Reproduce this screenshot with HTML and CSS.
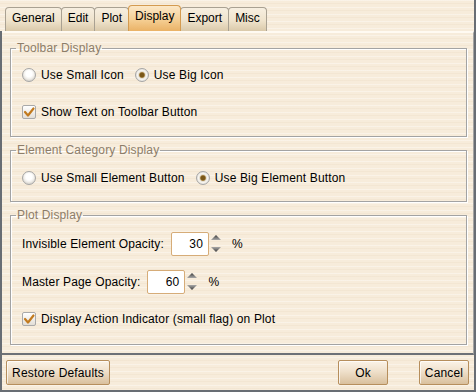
FILE: index.html
```html
<!DOCTYPE html>
<html lang="en">
  <head>
    <meta charset="UTF-8" />
    <meta name="viewport" content="width=device-width, initial-scale=1.0" />
    <title>Preferences - Display</title>
    <link rel="stylesheet" href="styles.css">
  </head>
  <body>
    <div class="window">
      <!-- tab strip -->
      <div class="tabs">
        <div class="tab">General</div>
        <div class="tab">Edit</div>
        <div class="tab">Plot</div>
        <div class="tab active">Display</div>
        <div class="tab">Export</div>
        <div class="tab">Misc</div>
      </div>

      <div class="frame">
        <div class="panel">
          <fieldset class="group group-toolbar">
            <legend>Toolbar Display</legend>
            <div class="row">
              <label class="option"><span class="radio"></span>Use Small Icon</label>
              <label class="option"><span class="radio on"></span>Use Big Icon</label>
            </div>
            <div class="row row-check">
              <label class="option">
                <span class="check">
                  <svg width="14" height="14" viewBox="0 0 14 14"><polyline points="3,7 6,10.5 11.5,3.5" fill="none" stroke="#c27a1e" stroke-width="2.2" stroke-linecap="round" stroke-linejoin="round"/></svg>
                </span>Show Text on Toolbar Button
              </label>
            </div>
          </fieldset>

          <fieldset class="group group-element">
            <legend>Element Category Display</legend>
            <div class="row">
              <label class="option"><span class="radio"></span>Use Small Element Button</label>
              <label class="option"><span class="radio on"></span>Use Big Element Button</label>
            </div>
          </fieldset>

          <fieldset class="group group-plot">
            <legend>Plot Display</legend>
            <div class="row row-spin">
              <span class="label">Invisible Element Opacity:</span>
              <span class="spin-box">30</span>
              <svg class="spin-arrows" width="12" height="24" viewBox="0 0 12 24">
                <defs>
                  <linearGradient id="arrowUp" x1="0" y1="0" x2="0" y2="1"><stop offset="0" stop-color="#3c3c3c"/><stop offset="1" stop-color="#a9a9a9"/></linearGradient>
                  <linearGradient id="arrowDown" x1="0" y1="0" x2="0" y2="1"><stop offset="0" stop-color="#a9a9a9"/><stop offset="1" stop-color="#3c3c3c"/></linearGradient>
                </defs>
                <polygon points="1,8 6,3 11,8" fill="url(#arrowUp)"/>
                <polygon points="1,15 6,20 11,15" fill="url(#arrowDown)"/>
              </svg>
              <span class="unit">%</span>
            </div>
            <div class="row row-spin row-spin2">
              <span class="label">Master Page Opacity:</span>
              <span class="spin-box">60</span>
              <svg class="spin-arrows" width="12" height="24" viewBox="0 0 12 24">
                <polygon points="1,8 6,3 11,8" fill="url(#arrowUp)"/>
                <polygon points="1,15 6,20 11,15" fill="url(#arrowDown)"/>
              </svg>
              <span class="unit">%</span>
            </div>
            <div class="row row-check row-check2">
              <label class="option">
                <span class="check">
                  <svg width="14" height="14" viewBox="0 0 14 14"><polyline points="3,7 6,10.5 11.5,3.5" fill="none" stroke="#c27a1e" stroke-width="2.2" stroke-linecap="round" stroke-linejoin="round"/></svg>
                </span>Display Action Indicator (small flag) on Plot
              </label>
            </div>
          </fieldset>
        </div>

        <div class="footer">
          <button class="btn btn-restore">Restore Defaults</button>
          <button class="btn btn-ok">Ok</button>
          <button class="btn btn-cancel">Cancel</button>
        </div>
      </div>
    </div>
  </body>
</html>
```

FILE: styles.css
```css
html, body {
  margin: 0;
  padding: 0;
}
body {
  font-family: "Liberation Sans", Arial, sans-serif;
  font-size: 12px;
  letter-spacing: 0.15px;
  color: #000;
}
.window {
  box-sizing: border-box;
  width: 476px;
  height: 392px;
  display: flex;
  flex-direction: column;
  border-right: 2px solid #686d74;
  border-bottom: 2px solid #686d74;
  background-color: #f7ecdb;
  background-image: repeating-linear-gradient(180deg,
    rgba(255, 255, 255, 0.35) 0 1px,
    transparent 1px 3px,
    rgba(225, 205, 175, 0.18) 3px 4px,
    transparent 4px 7px);
}

/* tabs */
.tabs {
  height: 31px;
  flex: none;
  display: flex;
  align-items: flex-end;
  padding-left: 5px;
}
.tab {
  box-sizing: border-box;
  height: 24px;
  padding: 0 6px 3px;
  display: flex;
  align-items: center;
  letter-spacing: 0;
  border: 1px solid #a9a192;
  border-bottom: 0;
  border-radius: 4px 4px 0 0;
  margin-left: -1px;
  background: linear-gradient(#f7efe1, #efe3cc 55%, #dac9aa);
}
.tab:first-child {
  margin-left: 0;
}
.tab.active {
  position: relative;
  z-index: 1;
  height: 26px;
  padding-bottom: 6px;
  border-color: #d49b50;
  background: linear-gradient(#fce8c8, #f5cf94 55%, #eab266);
}

/* body of the dialog */
.frame {
  flex: 1;
  display: flex;
  flex-direction: column;
  border-left: 2px solid #686d74;
}
.panel {
  box-sizing: border-box;
  height: 324px;
  padding: 8px 6px 0 8px;
  border-top: 2px solid #fffaf2;
  border-right: 1px solid #a4a4a4;
  border-bottom: 2px solid #6d7177;
}

.group {
  margin: 0;
  padding: 10px 0 14px 5px;
  border: 1px solid #a3a3a3;
  box-shadow: inset 1px 1px 0 #fff, 1px 1px 0 #fff;
  min-width: 0;
}
.group legend {
  padding: 0 1px;
  line-height: 14px;
  color: #8c7d69;
}
.group-element {
  margin-top: 6px;
  padding-top: 11px;
  padding-bottom: 13px;
}
.group-plot {
  margin-top: 6px;
  padding-bottom: 15px;
}

.row {
  display: flex;
  align-items: center;
  height: 20px;
  padding-left: 6px;
}
.row-check {
  margin-top: 17px;
}
.row-spin {
  height: 24px;
}
.row-spin2 {
  margin-top: 14px;
}
.row-check2 {
  margin-top: 15px;
}

.option {
  display: inline-flex;
  align-items: center;
  gap: 5px;
  margin-right: 11px;
}
.radio {
  box-sizing: border-box;
  width: 14px;
  height: 14px;
  border-radius: 50%;
  border: 1px solid #a6a6a6;
  background: radial-gradient(circle at 50% 40%, #ffffff 0 3px, #f2f0ec 5px, #d9d6d0 7px);
}
.radio.on {
  background: radial-gradient(circle, #7a5718 0 2px, #a8884c 2.6px, #e4ddd0 3.4px, #f7f5f0 4.5px, #d9d6d0 7px);
}
.check {
  box-sizing: border-box;
  width: 14px;
  height: 14px;
  border: 1px solid #a9a9a9;
  border-radius: 2px;
  background: linear-gradient(#ffffff, #e3ded6);
  display: flex;
}
.check svg {
  margin: -1px;
}

.label {
  margin-right: 7px;
}
.spin-box {
  box-sizing: border-box;
  width: 38px;
  height: 24px;
  padding-right: 5px;
  line-height: 22px;
  text-align: right;
  background: #fff;
  border: 1px solid #d6ac78;
  border-radius: 2px;
}
.spin-arrows {
  margin-left: 1px;
}
.unit {
  margin-left: 10px;
}

/* footer buttons */
.footer {
  flex: 1;
  display: flex;
  align-items: flex-start;
  padding: 5px 5px 0 4px;
}
.btn {
  box-sizing: border-box;
  height: 25px;
  padding: 0;
  white-space: nowrap;
  font-family: inherit;
  font-size: 12px;
  letter-spacing: 0.15px;
  color: #000;
  border: 1px solid #b68e5c;
  border-radius: 2px;
  background: linear-gradient(#fbf3e8, #efe0cb 45%, #d9c09d);
  box-shadow: inset 1px 1px 0 rgba(255, 255, 255, 0.7);
}
.btn-restore {
  width: 104px;
}
.btn-ok {
  width: 50px;
  margin-left: auto;
}
.btn-cancel {
  width: 50px;
  margin-left: 31px;
}
```
